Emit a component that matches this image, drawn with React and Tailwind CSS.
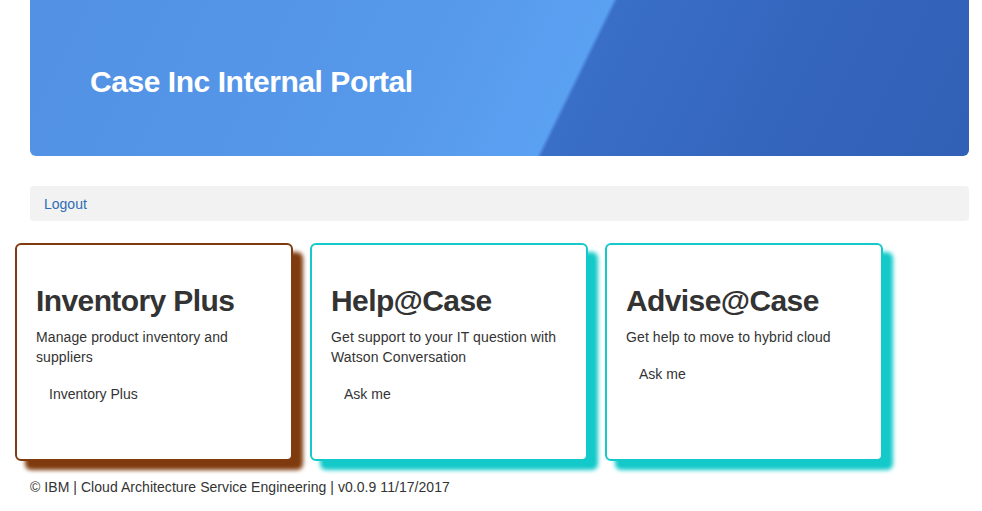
const cards = [
  {
    title: "Inventory Plus",
    text: "Manage product inventory and suppliers",
    link: "Inventory Plus",
    tone: "brown",
  },
  {
    title: "Help@Case",
    text: "Get support to your IT question with Watson Conversation",
    link: "Ask me",
    tone: "teal",
  },
  {
    title: "Advise@Case",
    text: "Get help to move to hybrid cloud",
    link: "Ask me",
    tone: "teal",
  },
];

function Card({ card }) {
  const border =
    card.tone === "brown"
      ? "border-[#7f3b0e] shadow-[10px_9px_4px_#7f3b0e]"
      : "border-[#13c9c9] shadow-[10px_9px_4px_#13c9c9]";
  return (
    <div
      className={`w-[278px] h-[218px] shrink-0 bg-white border-2 rounded-[6px] px-[19px] pt-[39px] ${border}`}
    >
      <h2 className="text-[30px] leading-[33px] font-bold tracking-[-0.6px] text-[#333]">{card.title}</h2>
      <p className="mt-[10px] text-[14px] leading-[20px] tracking-[0.1px] text-[#333]">{card.text}</p>
      <a className="block mt-[17px] pl-[13px] text-[14px] leading-[20px] text-[#333] cursor-pointer">
        {card.link}
      </a>
    </div>
  );
}

export default function App() {
  return (
    <div className="min-h-screen bg-white font-['Liberation_Sans',Arial,sans-serif] text-[#333]">
      {/* header banner */}
      <div className="ml-[30px] w-[939px] h-[156px] rounded-b-[6px] bg-[linear-gradient(116deg,#5291e3_0%,#5698ea_40%,#5ba1f2_57.4%,#3a6fc7_57.9%,#3465bd_80%,#3160b6_100%)] pl-[60px] pt-[65px]">
        <h1 className="text-[30px] leading-[33px] font-bold text-white tracking-[-0.45px]">
          Case Inc Internal Portal
        </h1>
      </div>

      {/* nav */}
      <div className="ml-[30px] w-[939px] mt-[30px] h-[35px] rounded-[4px] bg-[#f2f2f2] pl-[14px] pt-[6px]">
        <a className="text-[14px] leading-[20px] text-[#2f6db5] cursor-pointer">Logout</a>
      </div>

      {/* cards */}
      <div className="flex gap-[17px] pl-[15px] mt-[22px]">
        {cards.map((c) => (
          <Card key={c.title} card={c} />
        ))}
      </div>

      <footer className="pl-[30px] mt-[16px] text-[14px] leading-[20px] tracking-[0.05px] text-[#333]">
        © IBM | Cloud Architecture Service Engineering | v0.0.9 11/17/2017
      </footer>
    </div>
  );
}
